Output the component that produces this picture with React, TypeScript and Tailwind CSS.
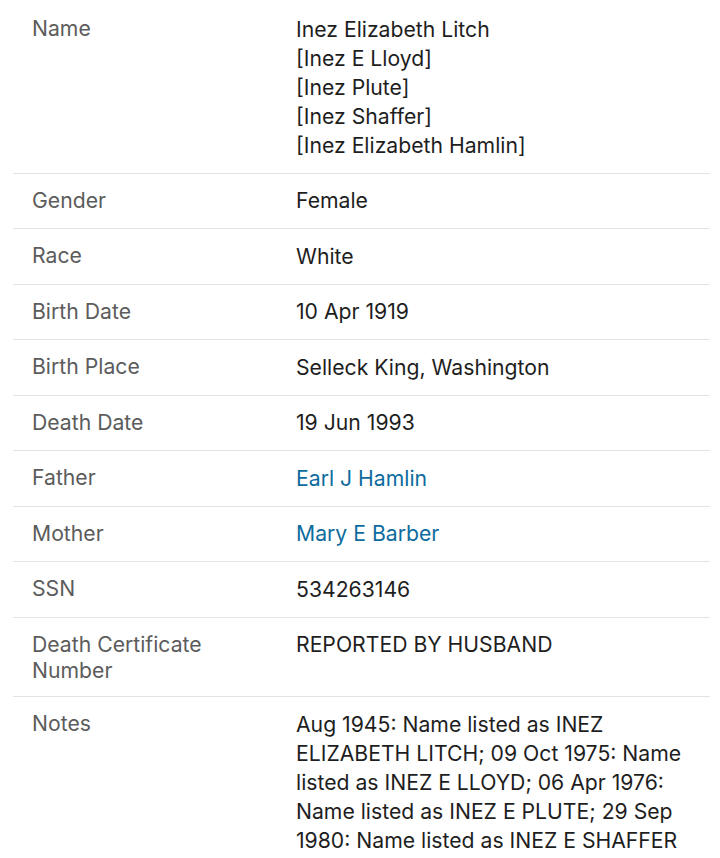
import React from "react";

type Row = { label: string; value: React.ReactNode };

const rows: Row[] = [
  {
    label: "Name",
    value: (
      <>
        <div>Inez Elizabeth Litch</div>
        <div>[Inez E Lloyd]</div>
        <div>[Inez Plute]</div>
        <div>[Inez Shaffer]</div>
        <div>[Inez Elizabeth Hamlin]</div>
      </>
    ),
  },
  { label: "Gender", value: "Female" },
  { label: "Race", value: "White" },
  { label: "Birth Date", value: "10 Apr 1919" },
  { label: "Birth Place", value: "Selleck King, Washington" },
  { label: "Death Date", value: "19 Jun 1993" },
  { label: "Father", value: <a className="text-[#0d6c9e]">Earl J Hamlin</a> },
  { label: "Mother", value: <a className="text-[#0d6c9e]">Mary E Barber</a> },
  { label: "SSN", value: "534263146" },
  { label: "Death Certificate Number", value: "REPORTED BY HUSBAND" },
  {
    label: "Notes",
    value:
      "Aug 1945: Name listed as INEZ ELIZABETH LITCH; 09 Oct 1975: Name listed as INEZ E LLOYD; 06 Apr 1976: Name listed as INEZ E PLUTE; 29 Sep 1980: Name listed as INEZ E SHAFFER",
  },
];

export default function App() {
  return (
    <div
      className="w-[720px] h-[858px] overflow-hidden bg-white pt-[2px]"
      style={{ fontFamily: "Inter, 'Noto Sans', sans-serif" }}
    >
      <div className="ml-[13px] w-[697px]">
        {rows.map((r, i) => (
          <div
            key={r.label}
            className={`flex py-[12.75px] pl-[19px] ${i < rows.length - 1 ? "border-b border-[#e3e3e3]" : ""}`}
          >
            <div className="w-[264px] shrink-0 pr-[30px] text-[21.2px] leading-[25.75px] text-[#5c5c5c] pt-[1.5px]">
              {r.label}
            </div>
            <div className="w-[396px] text-[21.2px] leading-[29px] text-[#1e1e1e]">{r.value}</div>
          </div>
        ))}
      </div>
    </div>
  );
}
